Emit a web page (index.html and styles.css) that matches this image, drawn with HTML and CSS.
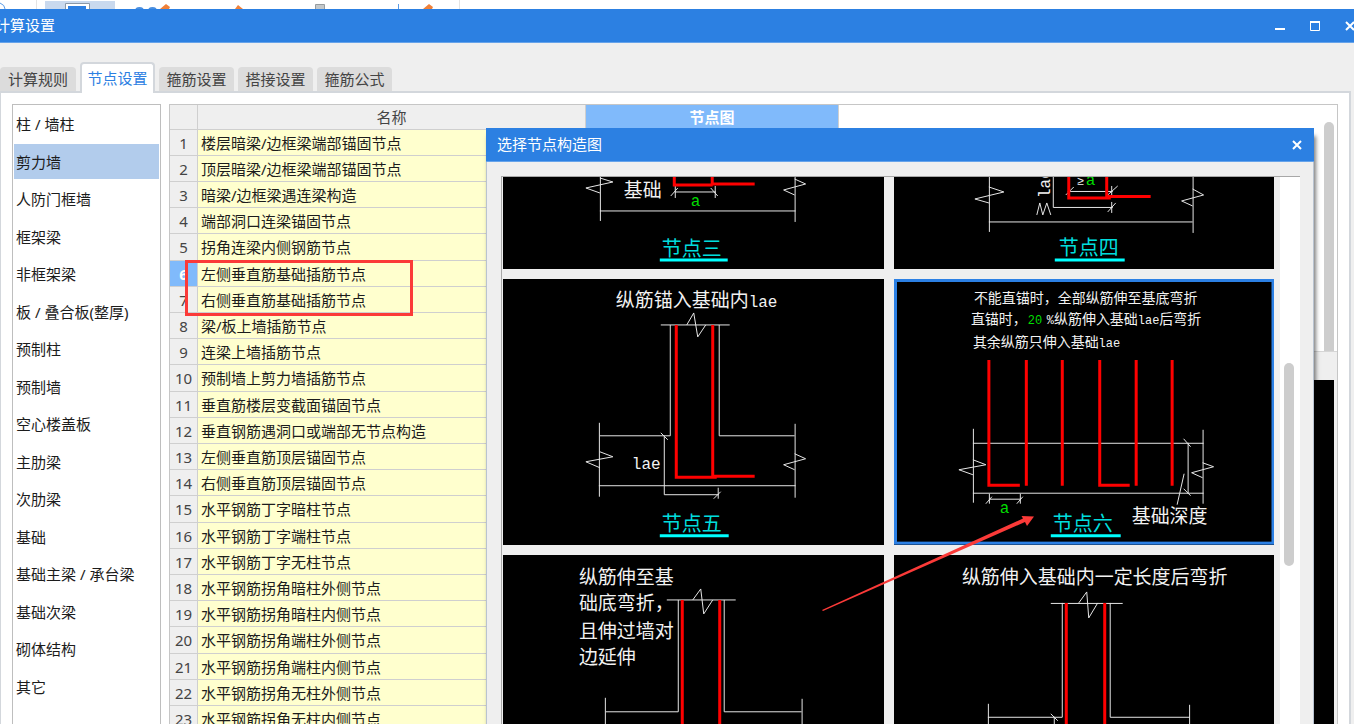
FILE: index.html
```html
<!DOCTYPE html>
<html lang="zh-CN">
<head>
<meta charset="utf-8">
<title>计算设置</title>
<link rel="stylesheet" href="styles.css">
</head>
<body>
<div class="app">
  <div class="ribbon">
    <svg class="ribbon-icons" width="470" height="9" viewBox="0 0 470 9" aria-hidden="true">
      <path d="M0 3 Q5 5 5 9" fill="none" stroke="#5b9be6"/>
      <path d="M36.500 0V9M459.500 0V9" stroke="#e4e4e4"/>
      <rect x="45" y="1" width="70" height="8" fill="#c9d9ee"/>
      <path d="M65.500 9V3.500H89.500V9" fill="#fff" stroke="#8a98a8"/>
      <rect x="68" y="6" width="18" height="3" fill="#2d7fe2"/>
      <path d="M136 9Q139.500 7 143 9M149 9Q152.500 7 156 9" fill="none" stroke="#4a8fe0" stroke-width="2"/>
      <path d="M160 9L166 4 170 7 169 9ZM235 9L238 5 243 9ZM423 9L429 4 433 7 432 9Z" fill="#f0813a"/>
      <path d="M315.500 9V4.500H324.500V9" fill="#c4c8ca" stroke="#969ca0"/>
      <path d="M398.500 4V9" stroke="#5b9be6"/>
    </svg>
  </div>
  <header class="titlebar main-title">
    <h1 class="title-text">计算设置</h1>
    <div class="window-buttons">
      <button class="win-btn" aria-label="最小化"><svg width="12" height="12" viewBox="0 0 12 12"><path d="M1 9H11" stroke="#fff" stroke-width="2"/></svg></button>
      <button class="win-btn" aria-label="最大化"><svg width="12" height="12" viewBox="0 0 12 12"><path d="M1.500 2V10.500H10.500V2" fill="none" stroke="#fff"/><path d="M1 2H11" stroke="#fff" stroke-width="2"/></svg></button>
      <button class="win-btn" aria-label="关闭"><svg width="12" height="12" viewBox="0 0 12 12"><path d="M2 2L10 10M10 2L2 10" stroke="#fff" stroke-width="2"/></svg></button>
    </div>
  </header>
  <main class="window-body">
    <div class="tabs" role="tablist">
      <button class="tab" role="tab">计算规则</button>
      <button class="tab tab-active" role="tab" aria-selected="true">节点设置</button>
      <button class="tab" role="tab">箍筋设置</button>
      <button class="tab" role="tab">搭接设置</button>
      <button class="tab" role="tab">箍筋公式</button>
    </div>
    <div class="tab-panel">
      <ul class="sidebar">
        <li><button class="side-item">柱 / 墙柱</button></li>
        <li><button class="side-item side-active">剪力墙</button></li>
        <li><button class="side-item">人防门框墙</button></li>
        <li><button class="side-item">框架梁</button></li>
        <li><button class="side-item">非框架梁</button></li>
        <li><button class="side-item">板 / 叠合板(整厚)</button></li>
        <li><button class="side-item">预制柱</button></li>
        <li><button class="side-item">预制墙</button></li>
        <li><button class="side-item">空心楼盖板</button></li>
        <li><button class="side-item">主肋梁</button></li>
        <li><button class="side-item">次肋梁</button></li>
        <li><button class="side-item">基础</button></li>
        <li><button class="side-item">基础主梁 / 承台梁</button></li>
        <li><button class="side-item">基础次梁</button></li>
        <li><button class="side-item">砌体结构</button></li>
        <li><button class="side-item">其它</button></li>
      </ul>
      <div class="content">
        <table class="nodes">
          <colgroup><col class="col-num"><col class="col-name"><col class="col-node"></colgroup>
          <thead><tr><th></th><th>名称</th><th class="head-active">节点图</th></tr></thead>
          <tbody>
            <tr><th>1</th><td>楼层暗梁/边框梁端部锚固节点</td><td></td></tr>
            <tr><th>2</th><td>顶层暗梁/边框梁端部锚固节点</td><td></td></tr>
            <tr><th>3</th><td>暗梁/边框梁遇连梁构造</td><td></td></tr>
            <tr><th>4</th><td>端部洞口连梁锚固节点</td><td></td></tr>
            <tr><th>5</th><td>拐角连梁内侧钢筋节点</td><td></td></tr>
            <tr><th class="row-active">6</th><td>左侧垂直筋基础插筋节点</td><td></td></tr>
            <tr><th>7</th><td>右侧垂直筋基础插筋节点</td><td></td></tr>
            <tr><th>8</th><td>梁/板上墙插筋节点</td><td></td></tr>
            <tr><th>9</th><td>连梁上墙插筋节点</td><td></td></tr>
            <tr><th>10</th><td>预制墙上剪力墙插筋节点</td><td></td></tr>
            <tr><th>11</th><td>垂直筋楼层变截面锚固节点</td><td></td></tr>
            <tr><th>12</th><td>垂直钢筋遇洞口或端部无节点构造</td><td></td></tr>
            <tr><th>13</th><td>左侧垂直筋顶层锚固节点</td><td></td></tr>
            <tr><th>14</th><td>右侧垂直筋顶层锚固节点</td><td></td></tr>
            <tr><th>15</th><td>水平钢筋丁字暗柱节点</td><td></td></tr>
            <tr><th>16</th><td>水平钢筋丁字端柱节点</td><td></td></tr>
            <tr><th>17</th><td>水平钢筋丁字无柱节点</td><td></td></tr>
            <tr><th>18</th><td>水平钢筋拐角暗柱外侧节点</td><td></td></tr>
            <tr><th>19</th><td>水平钢筋拐角暗柱内侧节点</td><td></td></tr>
            <tr><th>20</th><td>水平钢筋拐角端柱外侧节点</td><td></td></tr>
            <tr><th>21</th><td>水平钢筋拐角端柱内侧节点</td><td></td></tr>
            <tr><th>22</th><td>水平钢筋拐角无柱外侧节点</td><td></td></tr>
            <tr><th>23</th><td>水平钢筋拐角无柱内侧节点</td><td></td></tr>
          </tbody>
        </table>
        <div class="right-pane">
          <div class="pane-scroll"><div class="pane-thumb"></div></div>
          <div class="preview"></div>
        </div>
      </div>
    </div>
  </main>

  <section class="dialog" role="dialog" aria-label="选择节点构造图">
    <header class="titlebar dialog-title">
      <h2 class="title-text">选择节点构造图</h2>
      <button class="win-btn" aria-label="关闭"><svg width="12" height="12" viewBox="0 0 12 12"><path d="M2 2L10 10M10 2L2 10" stroke="#fff" stroke-width="2"/></svg></button>
    </header>
    <div class="dialog-body">
      <div class="gallery">
        <div class="cards">
          <svg class="card" viewBox="503 177 381 92">
            <g class="line">
              <path d="M600.500 177V221M795.500 177V222M600 211H796"/>
              <path d="M600 178L613 182 586 188 600 193M795 179L806 184 784 190 795 195"/>
              <path d="M675 192H716M675.500 186V198M715.500 186V198M671 196L678 188M711 188L718 196"/>
            </g>
            <path class="rebar" d="M674.500 177V185H713M712.500 177V184H755"/>
            <text class="t19" x="624" y="197">基础</text>
            <text class="m16 green" x="691" y="206">a</text>
            <text class="t20 cyan" x="662" y="256">节点三</text>
            <path class="under" d="M660 260H728"/>
          </svg>
          <svg class="card" viewBox="894 177 381 92">
            <g class="line">
              <path d="M989.500 177V232M1193.500 177V233M989 222H1193"/>
              <path d="M989 187L1004 192 975 199 989 203M1193 189L1204 195 1182 201 1193 206"/>
              <path d="M1053.500 177V207.500H1113M1112 202V213M1108 212L1116 203M1068 191.500H1113M1112 186V196M1108 195L1118 186M1066 195L1074 187"/>
            </g>
            <path class="rebar" d="M1069 177V198H1111M1107 177V196.500H1151"/>
            <text class="m16" x="1050" y="198" transform="rotate(-90 1050 198)">lae</text>
            <path class="line" d="M1037 215L1040 203 1043 215M1043 215L1047 203 1051 215"/>
            <text class="m12" x="1077" y="185">≥</text>
            <text class="m16 green" x="1086" y="185">a</text>
            <text class="t20 cyan" x="1059" y="255">节点四</text>
            <path class="under" d="M1055 260H1125"/>
          </svg>
          <svg class="card" viewBox="503 279 381 266">
            <g class="line">
              <path d="M661 325H730M687 325L694 313 698 337 706 325"/>
              <path d="M670.500 325V436H600M719.500 325V436H795M599.500 423V497M795.500 424V498M599 486H796"/>
              <path d="M600 452L613 457 586 462 600 468M795 454L806 459 784 465 795 470"/>
              <path d="M664.500 436V495H719M718.500 488V499M714 499L721 492M661 433L668 440"/>
            </g>
            <path class="rebar" d="M676.500 325V477.500H717M713 325V476.500H755"/>
            <text class="t19" x="616" y="307">纵筋锚入基础内<tspan class="m16">lae</tspan></text>
            <text class="m16" x="632" y="469">lae</text>
            <text class="t20 cyan" x="662" y="531">节点五</text>
            <path class="under" d="M660 536H729"/>
          </svg>
          <svg class="card card-selected" viewBox="894 279 381 266">
            <g class="line">
              <path d="M973 443.500H1204M973 493.500H1204M973.500 429V503M1203.500 430V504"/>
              <path d="M973 460L986 465 959 470 973 475M1203 463L1214 467 1192 473 1203 478"/>
              <path d="M1188.500 443V494M1184 439L1191 447M1184 489L1191 496M1184.500 474L1177.500 505"/>
              <path d="M989 499.500H1021M989.500 494V504M1020.500 494V504M986 504L992 497M1017 504L1023 497"/>
            </g>
            <path class="rebar" d="M989 360V485.500H1020M1026.500 360V486M1062.500 360V486M1100 360V485.500H1130M1136.500 360V486M1172.500 360V486"/>
            <text class="t14" x="974" y="303">不能直锚时，全部纵筋伸至基底弯折</text>
            <text class="t14" x="971" y="324">直锚时，</text>
            <text class="m12 green" x="1028" y="324">20</text>
            <text class="t14" x="1047" y="324"><tspan class="m12">%</tspan>纵筋伸入基础<tspan class="m12">lae</tspan>后弯折</text>
            <text class="t14" x="973" y="347">其余纵筋只伸入基础<tspan class="m12">lae</tspan></text>
            <text class="m16 green" x="1000" y="513">a</text>
            <text class="t20 cyan" x="1053" y="531">节点六</text>
            <path class="under" d="M1051 536H1121"/>
            <text class="t19" x="1132" y="523">基础深度</text>
            <rect x="895.500" y="280.500" width="378" height="263" fill="none" stroke="#2c80e4" stroke-width="3"/>
          </svg>
          <svg class="card" viewBox="503 555 381 266">
            <g class="line">
              <path d="M667 600H736M693 600L701 589 704 614 713 600"/>
              <path d="M678.500 600V712H606M724.500 600V712H802M605.500 698V772M802.500 699V773"/>
            </g>
            <path class="rebar" d="M682.500 600V753M720 600V753"/>
            <text class="t19" x="579" y="584">纵筋伸至基</text>
            <text class="t19" x="579" y="610">础底弯折，</text>
            <text class="t19" x="579" y="638">且伸过墙对</text>
            <text class="t19" x="579" y="664">边延伸</text>
          </svg>
          <svg class="card" viewBox="894 555 381 266">
            <g class="line">
              <path d="M1051 603.500H1123M1079 603L1087 592 1089 618 1098 603"/>
              <path d="M1062.500 603V717.500H988M1110.500 603V717.500H1190M988.500 704V778M1190 705V779M1054.500 717V770M1051 714L1058 721"/>
            </g>
            <path class="rebar" d="M1066.500 603V753M1105 603V753"/>
            <text class="t19" x="962" y="584">纵筋伸入基础内一定长度后弯折</text>
          </svg>
        </div>
        <div class="gallery-scroll"><div class="gallery-thumb"></div></div>
      </div>
    </div>
  </section>

  <div class="mark-box"></div>
  <svg class="mark-arrow" width="214" height="98" viewBox="821 514 214 98" aria-hidden="true">
    <path d="M822 610L1023 518.500 1021.500 516 1034 516.500 1027 526 1025 522 823 611Z" fill="#fb3a38"/>
  </svg>
</div>
</body>
</html>
```
FILE: styles.css
```css
* { box-sizing: border-box; }
body {
  margin: 0;
  font: 15px/20px "Noto Sans", "Noto Sans CJK SC", sans-serif;
  color: #1c1c1c;
}
button { font: inherit; color: inherit; border: 0; background: none; padding: 0; }
.app {
  position: relative;
  display: flex;
  flex-direction: column;
  height: 100vh;
  overflow: hidden;
  background: #fff;
}
.ribbon { height: 9px; flex: none; }
.ribbon-icons { display: block; }

.titlebar {
  display: flex;
  flex: none;
  align-items: center;
  justify-content: space-between;
  height: 34px;
  background: #2c80e2;
  border-bottom: 1px solid #66a3ea;
  color: #fff;
  overflow: hidden;
}
.title-text { margin: 0; padding-bottom: 2px; font-size: 15px; font-weight: 400; white-space: nowrap; }
.main-title .title-text { margin-left: -5px; }
.window-buttons { display: flex; margin-right: -13px; }
.win-btn { width: 35px; height: 33px; display: flex; align-items: center; justify-content: center; }

.window-body {
  flex: 1;
  min-height: 0;
  display: flex;
  flex-direction: column;
  background: #efefef;
  padding: 19px 3px 0 0;
}
.tabs { display: flex; align-items: flex-end; gap: 4px; height: 31px; flex: none; }
.tab {
  width: 75px;
  height: 26px;
  padding-bottom: 2px;
  background: #dcdcdc;
  border-radius: 4px 4px 0 0;
  color: #444;
  white-space: nowrap;
}
.tab:first-child { width: 76px; }
.tab-active {
  height: 31px;
  background: #fff;
  border: 2px solid #d3d7dc;
  border-bottom: 0;
  color: #2c80e2;
  z-index: 1;
}
.tab-panel {
  flex: 1;
  min-height: 0;
  display: flex;
  gap: 8px;
  margin-top: -2px;
  padding: 11px 11px 0 11px;
  background: #fff;
  border: solid #d3d7dc;
  border-width: 2px 2px 0 1px;
}
.sidebar {
  width: 149px;
  flex: none;
  margin: 0;
  padding: 1px 1px 0;
  list-style: none;
  border: solid #bebebe;
  border-width: 1px 1px 0 1px;
}
.sidebar li { height: 37px; }
.sidebar li:nth-child(odd) { height: 38px; }
.side-item { display: block; width: 100%; height: 35px; padding: 0 2px; text-align: left; white-space: nowrap; }
.side-active { background: #b2ccec; }

.content { flex: 1; min-width: 0; display: flex; border: solid #c6c6c6; border-width: 1px 1px 0 1px; overflow: hidden; }
.nodes { width: 669px; flex: none; align-self: flex-start; table-layout: fixed; border-collapse: separate; border-spacing: 0; }
.col-num { width: 28px; }
.col-name { width: 388px; }
.col-node { width: 253px; }
.nodes th, .nodes td { height: 26px; padding: 0; line-height: 20px; white-space: nowrap; border: solid #cfcfcf; border-width: 0 1px 1px 0; }
.nodes th { background: #efefef; color: #444; font-weight: 400; }
.nodes thead th { height: 25px; }
.nodes tbody tr:nth-child(5n) > * { height: 27px; }
.nodes td { background: #ffffce; padding-left: 3px; }
.nodes .head-active { background: #80bafb; color: #fff; font-weight: 700; }
.nodes .row-active { background: #80bafb; color: #fff; font-weight: 700; }
.right-pane { flex: 1; display: flex; flex-direction: column; background: #efefef; padding-right: 3px; }
.pane-scroll { height: 247px; flex: none; margin-right: -3px; padding: 17px 3px 0 0; background: #fff; border-bottom: 1px solid #d6d6d6; display: flex; justify-content: flex-end; }
.pane-thumb { width: 10px; background: #cdcdcd; border-radius: 5px 5px 0 0; }
.preview { flex: 1; margin-top: 28px; background: #000; }

.dialog {
  position: absolute;
  top: 128px;
  right: 40px;
  bottom: 0;
  left: 486px;
  display: flex;
  flex-direction: column;
  background: #efefef;
  box-shadow: 2px 8px 4px rgba(0, 0, 0, .5);
}
.dialog-title { padding-left: 11px; }
.dialog-body { flex: 1; min-height: 0; padding: 14px 13px 0 14px; border: solid #b9c3d0; border-width: 0 1px; }
.gallery { height: 100%; display: flex; gap: 6px; border: solid #a8a8a8; border-width: 1px 0 0 1px; overflow: hidden; }
.cards { flex: 1; align-self: flex-start; display: grid; grid-template-columns: 1fr 1fr; grid-auto-rows: max-content; gap: 10px; padding-left: 1px; }
.card { display: block; width: 100%; background: #000; }
.gallery-scroll { width: 20px; background: #fff; padding: 186px 6px 0 4px; }
.gallery-thumb { height: 203px; border-radius: 5px; background: #cdcdcd; }

.line { fill: none; stroke: #e6e6e6; stroke-width: 1; }
.rebar { fill: none; stroke: #f00; stroke-width: 3; }
.under { stroke: #0ff; stroke-width: 3; }
.card text { fill: #f2f2f2; font-family: "Noto Sans CJK SC", sans-serif; font-weight: 400; }
.card .t14 { font-size: 14px; }
.card .t19 { font-size: 19px; }
.card .t20 { font-size: 20px; }
.card .m12 { font-family: "Liberation Mono", monospace; font-size: 12px; }
.card .m16 { font-family: "Liberation Mono", monospace; font-size: 16px; }
.card .cyan { fill: #0dd; }
.card .green { fill: #0d0; }

.mark-box { position: absolute; top: 260px; left: 185px; width: 228px; height: 56px; border: 3px solid #fb3a38; }
.mark-arrow { position: absolute; top: 514px; left: 821px; }
```
